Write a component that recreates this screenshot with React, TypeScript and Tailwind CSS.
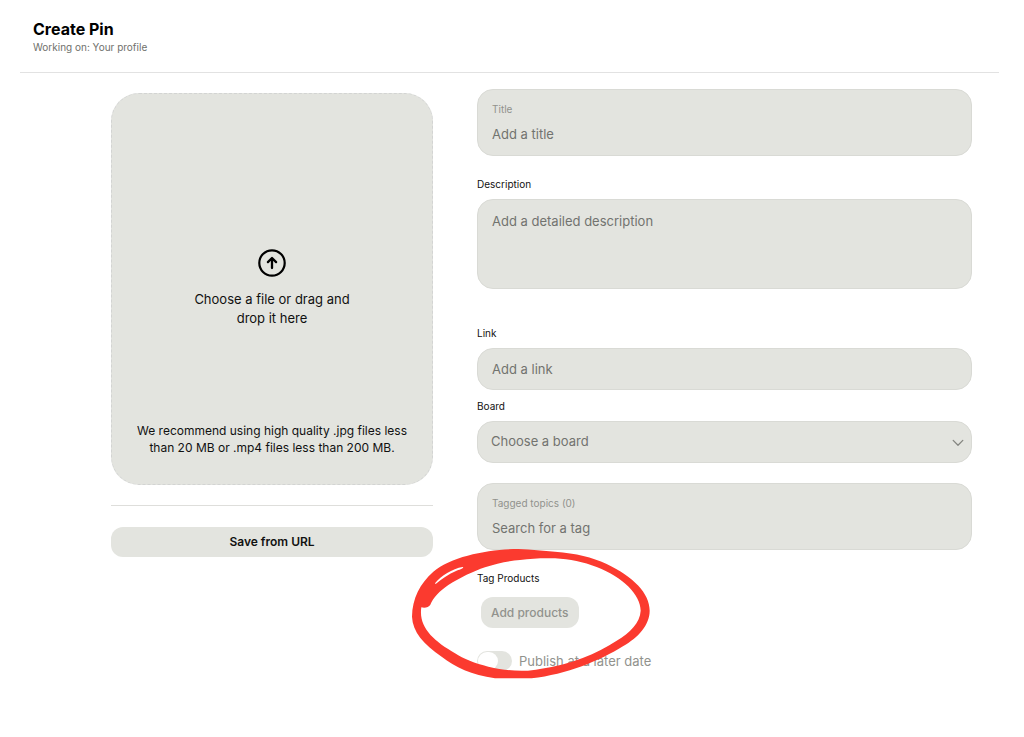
import { useState } from 'react';
import type { ReactNode } from 'react';

const boxClass = 'w-full rounded-2xl border border-[#d9dad5] bg-[#e3e4df]';
const inputClass = 'text-[13px] text-[#72736f] placeholder:text-[#72736f] outline-none';

function Field({ id, label, className, children }: { id: string; label: string; className?: string; children: ReactNode }) {
  return (
    <div className={className}>
      <label htmlFor={id} className="mb-[7px] block text-[10px] leading-4 text-[#111111]">
        {label}
      </label>
      {children}
    </div>
  );
}

function InsetField({ id, label, placeholder }: { id: string; label: string; placeholder: string }) {
  return (
    <div className={`${boxClass} px-[14px] pt-[11px] pb-[9px]`}>
      <label htmlFor={id} className="block text-[10px] leading-4 text-[#91928d]">
        {label}
      </label>
      <input id={id} type="text" placeholder={placeholder} className={`${inputClass} mt-[5px] block h-6 w-full bg-transparent`} />
    </div>
  );
}

function UploadPanel() {
  return (
    <section className="w-[322px] shrink-0 pt-1">
      <label className="flex h-[392px] cursor-pointer flex-col items-center rounded-[28px] border border-dashed border-[#d3d4d3] bg-[#e3e4df] px-6 pt-[155px] pb-7 text-center text-[#111111]">
        <input type="file" className="sr-only" />
        <svg viewBox="0 0 28 28" className="size-7" fill="none" stroke="#000000" aria-hidden="true">
          <circle cx="14" cy="14" r="12.7" strokeWidth="2.2" />
          <path d="M14 19V9.6M9.9 13.1 14 9l4.1 4.1" strokeWidth="2.3" strokeLinecap="round" strokeLinejoin="round" />
        </svg>
        <span className="mt-[13px] w-44 text-[13px] leading-[19px]">Choose a file or drag and drop it here</span>
        <span className="mt-auto text-xs leading-[17px]">
          We recommend using high quality .jpg files less than 20 MB or .mp4 files less than 200 MB.
        </span>
      </label>
      <hr className="mt-5 border-[#dededb]" />
      <button type="button" className="mt-[21px] h-[30px] w-full rounded-xl bg-[#e3e4df] text-xs font-semibold text-[#111111]">
        Save from URL
      </button>
    </section>
  );
}

// Hand-drawn marker ring around the product tagging controls
function MarkerRing() {
  return (
    <svg
      viewBox="0 0 810 450"
      className="pointer-events-none absolute -top-[30px] -left-[77px] h-[150px] w-[270px]"
      fill="#fb3a2f"
      aria-hidden="true"
    >
      <path
        fillRule="evenodd"
        d="M36 230C37 175 60 130 100 95C155 48 270 27 355 27C395 28 430 33 465 35C530 40 575 51 620 72C700 110 749 160 749 212C749 255 715 292 670 318C600 362 500 403 395 415L285 415C215 404 165 382 125 350C70 312 38 275 36 230Z
           M64 202C75 205 86 202 91 194C100 172 120 152 145 135C180 113 220 94 255 82C290 70 330 62 360 60C395 55 430 54 465 55C510 58 550 66 590 81C670 112 722 165 722 212C720 248 690 278 650 302C590 341 515 373 420 387C400 391 380 393 365 392C330 392 300 388 265 380C225 371 190 356 165 340C100 302 55 262 64 202Z
           M105 130C123 107 157 86 188 81C195 84 178 89 168 93C147 102 125 117 107 132Z"
      />
    </svg>
  );
}

function App() {
  const [scheduled, setScheduled] = useState(false);

  return (
    <div className="min-h-screen bg-white font-['Inter',sans-serif]">
      <header className="mx-5 border-b border-[#e2e2e2] px-[13px] pt-[17px] pb-[19px] lg:mr-[25px]">
        <h1 className="text-base leading-6 font-bold text-black">Create Pin</h1>
        <p className="text-[10px] leading-3 text-[#70716c]">Working on: Your profile</p>
      </header>

      <main className="flex gap-11 pt-4 pr-[52px] pb-14 pl-[111px]">
        <UploadPanel />

        <form className="min-w-0 flex-1">
          <InsetField id="title" label="Title" placeholder="Add a title" />

          <Field id="description" label="Description" className="mt-5">
            <textarea
              id="description"
              placeholder="Add a detailed description"
              className={`${boxClass} ${inputClass} block h-[90px] resize-none px-[14px] py-3`}
            />
          </Field>

          <Field id="link" label="Link" className="mt-9">
            <input id="link" type="url" placeholder="Add a link" className={`${boxClass} ${inputClass} block h-[42px] px-[14px]`} />
          </Field>

          <Field id="board" label="Board" className="mt-2">
            <div className="relative">
              <select id="board" className={`${boxClass} ${inputClass} block h-[42px] appearance-none px-[13px]`}>
                <option>Choose a board</option>
              </select>
              <svg
                viewBox="0 0 12 8"
                className="pointer-events-none absolute top-[18px] right-2 h-2 w-3"
                fill="none"
                stroke="#858681"
                strokeWidth="1.3"
                aria-hidden="true"
              >
                <path d="M1.2 1.4 6 6.2l4.8-4.8" strokeLinecap="round" strokeLinejoin="round" />
              </svg>
            </div>
          </Field>

          <div className="mt-5">
            <InsetField id="topics" label="Tagged topics (0)" placeholder="Search for a tag" />
          </div>

          <section className="relative mt-5">
            <h2 className="text-[10px] leading-4 text-[#111111]">Tag Products</h2>
            <button type="button" className="mt-[11px] ml-1 block h-[31px] rounded-xl bg-[#e3e4df] px-[10px] text-xs font-medium text-[#91928d]">
              Add products
            </button>
            <label className="mt-[23px] flex w-fit items-center gap-[7px] text-[13px] leading-5 text-[#91928d]">
              <input
                type="checkbox"
                role="switch"
                checked={scheduled}
                onChange={(e) => setScheduled(e.target.checked)}
                className="h-5 w-[35px] appearance-none rounded-full bg-[#e3e4df] p-px before:block before:h-[18px] before:w-5 before:rounded-full before:bg-white checked:bg-black checked:before:ml-auto"
              />
              Publish at a later date
            </label>
            <MarkerRing />
          </section>
        </form>
      </main>
    </div>
  );
}

export default App;
